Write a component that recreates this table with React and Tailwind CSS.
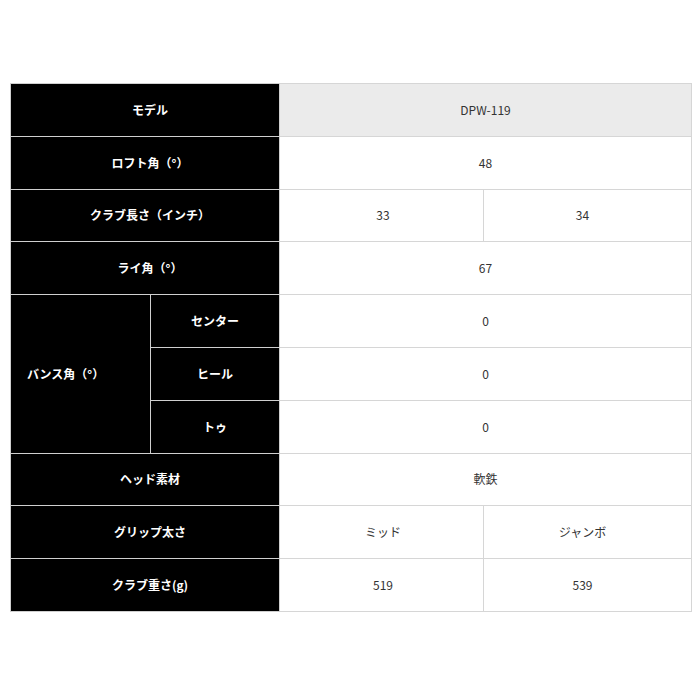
const rows = [
  { label: 'ロフト角（°）', values: ['48'] },
  { label: 'クラブ長さ（インチ）', values: ['33', '34'] },
  { label: 'ライ角（°）', values: ['67'] },
];

const rowsAfter = [
  { label: 'ヘッド素材', values: ['軟鉄'] },
  { label: 'グリップ太さ', values: ['ミッド', 'ジャンボ'] },
  { label: 'クラブ重さ(g)', values: ['519', '539'] },
];

const th = 'bg-black text-white font-bold border border-[#cfcfcf] text-center text-[12px]';
const td = 'border border-[#d6d6d6] text-center text-[12px] text-[#333]';

const ValueCells = ({ values }) =>
  values.length === 1 ? (
    <td colSpan={2} className={td}>{values[0]}</td>
  ) : (
    <>
      <td className={td + ' pl-[3px]'}>{values[0]}</td>
      <td className={td + ' pr-[10px]'}>{values[1]}</td>
    </>
  );

export default function App() {
  return (
    <div className="w-[700px] h-[700px] bg-white pt-[83px] pl-[10px]" style={{ fontFamily: '"Noto Sans CJK JP", "Noto Sans", sans-serif' }}>
      <table className="border-collapse table-fixed w-[681px]">
        <colgroup>
          <col className="w-[140px]" />
          <col className="w-[129px]" />
          <col className="w-[204px]" />
          <col className="w-[208px]" />
        </colgroup>
        <tbody>
          <tr className="h-[52.8px]">
            <th colSpan={2} className={th + ' pl-[10px]'}>モデル</th>
            <td colSpan={2} className={td + ' bg-[#ebebeb]'}>DPW-119</td>
          </tr>
          {rows.map((r) => (
            <tr key={r.label} className="h-[52.8px]">
              <th colSpan={2} className={th + ' pl-[10px]'}>{r.label}</th>
              <ValueCells values={r.values} />
            </tr>
          ))}
          <tr className="h-[52.8px]">
            <th rowSpan={3} className={th + ' text-left pl-[16px]'}>バンス角（°）</th>
            <th className={th}>センター</th>
            <td colSpan={2} className={td}>0</td>
          </tr>
          <tr className="h-[52.8px]">
            <th className={th}>ヒール</th>
            <td colSpan={2} className={td}>0</td>
          </tr>
          <tr className="h-[52.8px]">
            <th className={th}>トゥ</th>
            <td colSpan={2} className={td}>0</td>
          </tr>
          {rowsAfter.map((r) => (
            <tr key={r.label} className="h-[52.8px]">
              <th colSpan={2} className={th + ' pl-[10px]'}>{r.label}</th>
              <ValueCells values={r.values} />
            </tr>
          ))}
        </tbody>
      </table>
    </div>
  );
}
